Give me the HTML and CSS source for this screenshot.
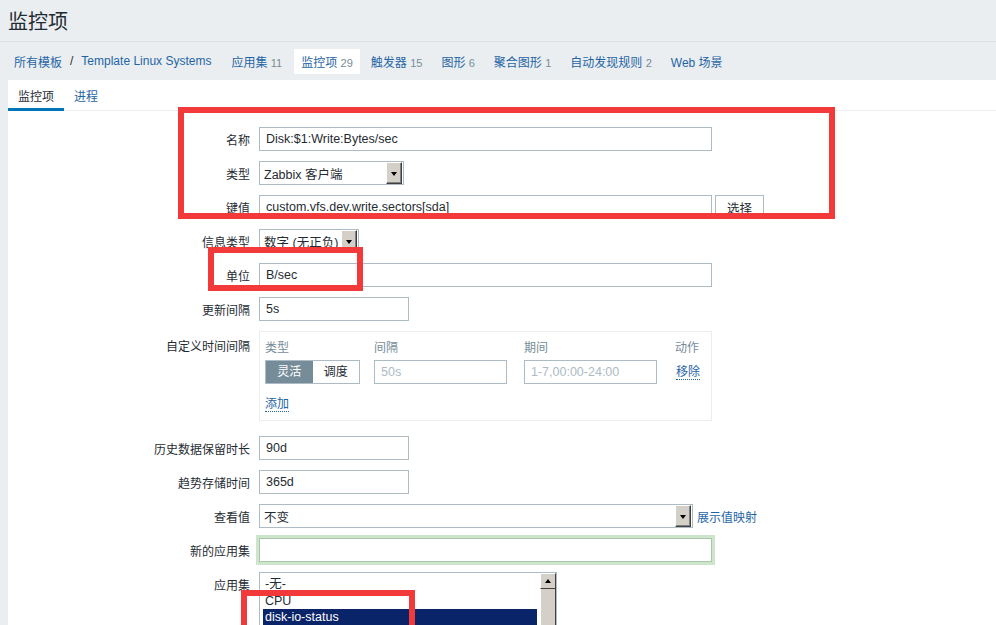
FILE: index.html
```html
<!DOCTYPE html>
<html lang="zh">
<head>
<meta charset="utf-8">
<title>监控项</title>
<link rel="stylesheet" href="styles.css">
</head>
<body>
<header class="page-head"><h1>监控项</h1></header>
<nav class="crumbs">
  <a class="lnk">所有模板</a><span class="sep">/</span><a class="lnk">Template Linux Systems</a>
  <a class="lnk item">应用集 <span class="cnt">11</span></a>
  <a class="lnk item cur">监控项 <span class="cnt">29</span></a>
  <a class="lnk item">触发器 <span class="cnt">15</span></a>
  <a class="lnk item">图形 <span class="cnt">6</span></a>
  <a class="lnk item">聚合图形 <span class="cnt">1</span></a>
  <a class="lnk item">自动发现规则 <span class="cnt">2</span></a>
  <a class="lnk item">Web 场景</a>
</nav>
<main class="panel">
  <div class="tabs">
    <span class="tab active">监控项</span>
    <span class="tab">进程</span>
  </div>
  <div class="form">
    <div class="row"><label>名称</label><div class="field"><div class="inp w453">Disk:$1:Write:Bytes/sec</div></div></div>
    <div class="row"><label>类型</label><div class="field"><div class="sel w145"><span>Zabbix 客户端</span><i class="arr"></i></div></div></div>
    <div class="row"><label>键值</label><div class="field"><div class="inp w453">custom.vfs.dev.write.sectors[sda]</div><button class="btn">选择</button></div></div>
    <div class="row"><label>信息类型</label><div class="field"><div class="sel w100"><span>数字 (无正负)</span><i class="arr"></i></div></div></div>
    <div class="row"><label>单位</label><div class="field"><div class="inp w453">B/sec</div></div></div>
    <div class="row"><label>更新间隔</label><div class="field"><div class="inp w150">5s</div></div></div>
    <div class="row tall"><label>自定义时间间隔</label>
      <div class="field">
        <div class="intervals">
          <div class="ihead"><span class="c1">类型</span><span class="c2">间隔</span><span class="c3">期间</span><span class="c4">动作</span></div>
          <div class="irow">
            <div class="seg"><span class="on">灵活</span><span>调度</span></div>
            <div class="inp ph w133">50s</div>
            <div class="inp ph w133">1-7,00:00-24:00</div>
            <a class="dlink">移除</a>
          </div>
          <a class="dlink add">添加</a>
        </div>
      </div>
    </div>
    <div class="row"><label>历史数据保留时长</label><div class="field"><div class="inp w150">90d</div></div></div>
    <div class="row"><label>趋势存储时间</label><div class="field"><div class="inp w150">365d</div></div></div>
    <div class="row"><label>查看值</label><div class="field"><div class="sel w434"><span>不变</span><i class="arr"></i></div><a class="lnk map">展示值映射</a></div></div>
    <div class="row"><label>新的应用集</label><div class="field"><div class="inp w453 focus"></div></div></div>
    <div class="row top"><label>应用集</label><div class="field">
      <div class="listbox">
        <div class="opts"><div>-无-</div><div>CPU</div><div class="selopt">disk-io-status</div></div>
        <div class="sbar"><i class="up"></i><div class="track"></div></div>
      </div>
    </div></div>
  </div>
</main>
<div class="mark m1"></div>
<div class="mark m2"></div>
<div class="mark m3"></div>
</body>
</html>
```
FILE: styles.css
```css
* { box-sizing: border-box; }
html, body { margin: 0; padding: 0; }
body {
  width: 996px; height: 625px; overflow: hidden;
  background: #ebeef0;
  font-family: "Liberation Sans", "Noto Sans CJK SC", sans-serif;
  font-size: 12px; color: #1f2c33;
  position: relative;
}
.page-head { padding: 9px 8px 0; height: 42px; border-bottom: 1px solid #dde1e4; }
.page-head h1 { margin: 0; font-size: 20px; font-weight: normal; line-height: 26px; color: #1f2c33; }
.crumbs { display: flex; align-items: center; height: 38px; padding: 0 0 0 14px; }
.lnk { color: #1f65a6; text-decoration: none; white-space: nowrap; }
.sep { color: #1f2c33; margin: 0 8px; }
.cnt { color: #768d99; font-size: 11px; }
.item { margin-left: 20px; padding: 3px 0; }
.item + .item { margin-left: 19px; }
.cur { background: #fff; padding: 4px 7px; margin-left: 12px !important; margin-right: -7px; }
.item.cur + .item { margin-left: 18px; }
.panel { background: #fff; margin-left: 8px; height: 545px; }
.tabs { display: flex; height: 31px; border-bottom: 1px solid #ebeef0; }
.tab { padding: 7px 10px 0; color: #1f65a6; font-size: 12px; height: 31px; }
.tab.active { color: #1f2c33; border-bottom: 3px solid #0275b8; width: 56px; }
.form { padding-top: 16px; }
.row { display: grid; grid-template-columns: 251px auto; margin-bottom: 10px; align-items: center; }
.row.tall { align-items: start; margin-bottom: 15px; }
.row.tall label { padding-top: 6px; }
.row.top { align-items: start; }
.row.top label { padding-top: 4px; }
.row label { text-align: right; padding-right: 9px; color: #1f2c33; }
.field { display: flex; align-items: center; gap: 3px; }
.inp {
  height: 24px; border: 1px solid #acbbc4; background: #fff;
  padding: 0 6px; line-height: 22px; font-size: 12.5px; color: #1f2c33; white-space: nowrap;
}
.inp.ph { color: #acbbc4; }
.inp.focus { border-color: #a9c8a9; box-shadow: 0 0 0 3px #cde5cd; }
.w453 { width: 453px; }
.w150 { width: 150px; }
.w133 { width: 133px; }
.w145 { width: 145px; }
.w100 { width: 100px; }
.w434 { width: 434px; }
.sel {
  height: 24px; border: 1px solid #acbbc4; background: #fff;
  display: flex; align-items: center; justify-content: space-between;
  padding: 0 1px 0 4px; font-size: 12.5px; white-space: nowrap; overflow: hidden;
}
.arr {
  width: 16px; height: 22px; flex: none;
  background: #d4d0c8;
  border-top: 1px solid #fff; border-left: 1px solid #fff;
  border-right: 1px solid #404040; border-bottom: 1px solid #404040;
  box-shadow: inset -1px -1px 0 #808080;
  position: relative;
}
.arr::after {
  content: ""; position: absolute; left: 4px; top: 9px;
  border-left: 3.5px solid transparent; border-right: 3.5px solid transparent; border-top: 4px solid #000;
}
.btn {
  height: 24px; width: 49px; border: 1px solid #acbbc4; background: #fff;
  font-family: inherit; font-size: 12.5px; color: #1f2c33; padding: 0;
}
.map { margin-left: 1px; }
.intervals { width: 453px; height: 90px; border: 1px solid #ebeef0; padding: 6px 5px; position: relative; }
.ihead { position: relative; height: 16px; color: #768d99; }
.ihead span { position: absolute; top: 0; }
.ihead .c1 { left: 0; }
.ihead .c2 { left: 109px; }
.ihead .c3 { left: 259px; }
.ihead .c4 { left: 410px; }
.irow { display: flex; align-items: center; margin-top: 6px; height: 24px; }
.seg { display: flex; border: 1px solid #acbbc4; height: 24px; width: 95px; margin-right: 14px; }
.seg span { flex: 1; text-align: center; line-height: 22px; color: #1f2c33; }
.seg .on { background: #768d99; color: #fff; }
.irow .inp + .inp { margin-left: 17px; }
.dlink { color: #1f65a6; border-bottom: 1px dotted #1f65a6; text-decoration: none; line-height: 14px; }
.irow .dlink { margin-left: 19px; }
.add { display: inline-block; margin-top: 13px; }
.listbox { width: 298px; height: 60px; border: 1px solid #acbbc4; border-bottom: none; display: flex; background: #fff; }
.opts { flex: 1; padding: 3px 3px 0 3px; font-size: 12.5px; line-height: 16.5px; }
.opts div { padding-left: 2px; }
.opts .selopt { background: #0a246a; color: #fff; }
.sbar { width: 16px; background: #e4e2dc; display: flex; flex-direction: column; }
.sbar .up {
  height: 16px; background: #d4d0c8; position: relative;
  border-top: 1px solid #fff; border-left: 1px solid #fff; border-right: 1px solid #404040; border-bottom: 1px solid #404040;
}
.sbar .up::after {
  content: ""; position: absolute; left: 3.5px; top: 5px;
  border-left: 3.5px solid transparent; border-right: 3.5px solid transparent; border-bottom: 4px solid #000;
}
.sbar .track { flex: 1; background: #d4d0c8; border-left: 1px solid #fff; border-right: 1px solid #404040; }
.mark { position: absolute; border: 6px solid #f23a3a; pointer-events: none; }
.m1 { left: 178px; top: 107px; width: 657px; height: 112px; }
.m2 { left: 208px; top: 247px; width: 155px; height: 44px; }
.m3 { left: 241px; top: 590px; width: 174px; height: 50px; }
```
